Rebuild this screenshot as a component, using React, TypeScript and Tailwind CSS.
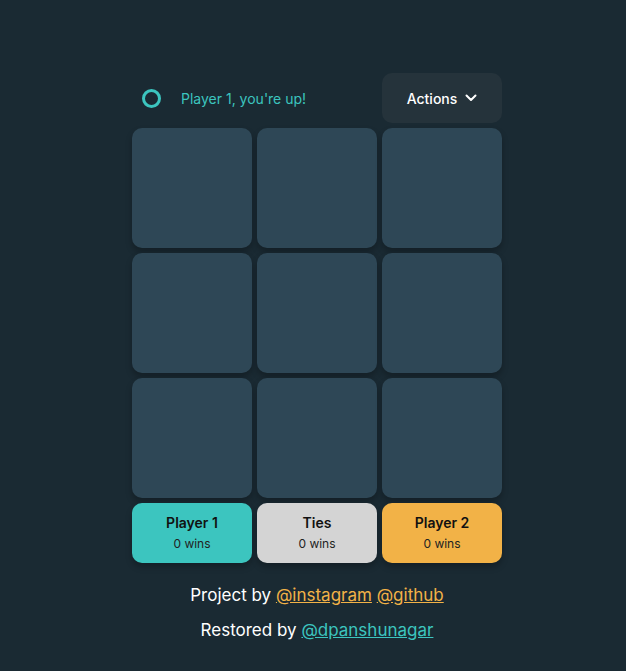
const cells = Array.from({ length: 9 }, (_, i) => i);

const scores = [
  { name: "Player 1", wins: 0, bg: "bg-[#3cc5bf]" },
  { name: "Ties", wins: 0, bg: "bg-[#d4d4d4]" },
  { name: "Player 2", wins: 0, bg: "bg-[#f2b247]" },
];

export default function App() {
  return (
    <div
      className="flex min-h-[671px] w-full justify-center bg-[#1a2a33] pl-[8px] pt-[73px]"
      style={{ fontFamily: "Inter, 'Noto Sans', sans-serif" }}
    >
      <div className="flex w-[370px] flex-col gap-[5px]">
        {/* turn + actions */}
        <div className="flex h-[50px] items-center justify-between">
          <div className="flex items-center">
            <span className="ml-[10px] block h-[19px] w-[19px] rounded-full border-[3px] border-[#3cc5bf]" />
            <span className="ml-[20px] text-[14px] text-[#3cc5bf]">
              Player 1, you're up!
            </span>
          </div>
          <button
            type="button"
            className="flex h-[50px] w-[120px] items-center justify-center gap-[8px] rounded-[10px] bg-[#25333b] text-[14px] font-medium text-white"
          >
            Actions
            <svg width="12" height="8" viewBox="0 0 12 8" fill="none">
              <path
                d="M1.5 1.5 6 6l4.5-4.5"
                stroke="white"
                strokeWidth="2"
                strokeLinecap="round"
                strokeLinejoin="round"
              />
            </svg>
          </button>
        </div>

        {/* board */}
        <div className="grid grid-cols-3 gap-[5px]">
          {cells.map((c) => (
            <div
              key={c}
              className="h-[120px] rounded-[10px] bg-[#2e4756] shadow-[0_4px_6px_rgba(0,0,0,0.25)]"
            />
          ))}
        </div>

        {/* scores */}
        <div className="grid grid-cols-3 gap-[5px]">
          {scores.map((s) => (
            <div
              key={s.name}
              className={`flex h-[60px] flex-col items-center justify-center rounded-[10px] shadow-[0_4px_6px_rgba(0,0,0,0.25)] ${s.bg}`}
            >
              <span className="text-[14px] font-semibold leading-[18px] text-[#111]">
                {s.name}
              </span>
              <span className="mt-[4px] text-[12px] leading-[16px] text-[#222]">
                {s.wins} wins
              </span>
            </div>
          ))}
        </div>

        {/* footer */}
        <div className="mt-[16px] flex flex-col items-center gap-[12px] text-[17px] text-white">
          <p className="leading-[23px]">
            Project by{" "}
            <a href="#" className="text-[#f2b247] underline">
              @instagram
            </a>{" "}
            <a href="#" className="text-[#f2b247] underline">
              @github
            </a>
          </p>
          <p className="leading-[23px]">
            Restored by{" "}
            <a href="#" className="text-[#3cc5bf] underline">
              @dpanshunagar
            </a>
          </p>
        </div>
      </div>
    </div>
  );
}
